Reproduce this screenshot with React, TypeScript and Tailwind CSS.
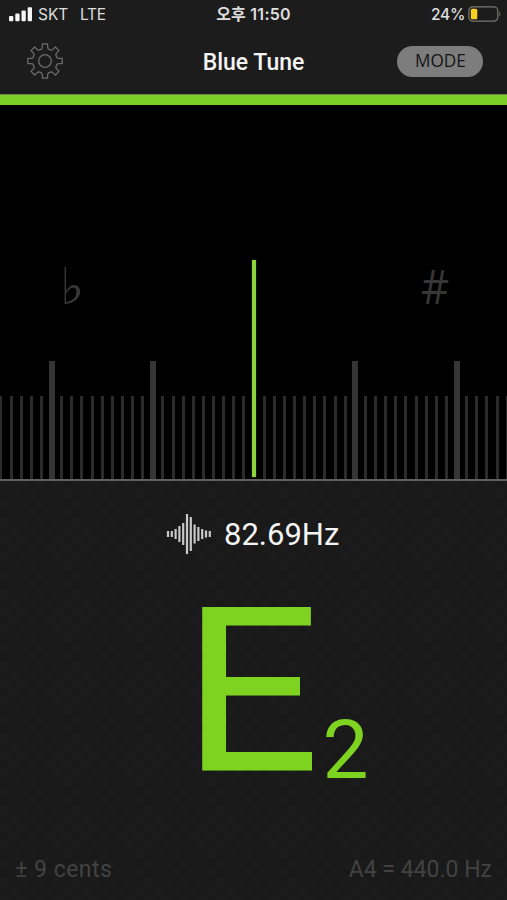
import React from 'react';

const STEP_COUNT = 25;
const ticks = Array.from({ length: STEP_COUNT * 2 + 1 }, (_, i) => i - STEP_COUNT);

// half heights of the wave icon bars
const wave = [3, 3, 5, 8, 11, 20, 17, 9.5, 7, 5, 3.5, 3];

const GearIcon = () => {
  const points: string[] = [];
  for (let i = 0; i < 8; i++) {
    const at = (deg: number, r: number) => {
      const a = ((i * 45 + deg - 90) * Math.PI) / 180;
      return `${(18 + r * Math.cos(a)).toFixed(2)} ${(18 + r * Math.sin(a)).toFixed(2)}`;
    };
    points.push(
      `${i === 0 ? 'M' : 'L'}${at(-16, 12.4)}`,
      `Q${at(-12, 12.8)} ${at(-11, 14)}`,
      `L${at(-8.5, 17.4)}`,
      `L${at(8.5, 17.4)}`,
      `L${at(11, 14)}`,
      `Q${at(12, 12.8)} ${at(16, 12.4)}`
    );
  }
  return (
    <svg className="h-9 w-9" viewBox="0 0 36 36" fill="none" stroke="#6c6c6c" strokeWidth="1.3" strokeLinejoin="round">
      <path d={points.join(' ') + 'Z'} />
      <circle cx="18" cy="18" r="6.3" />
    </svg>
  );
};

const StatusBar = () => (
  <div className="relative flex h-7 items-center justify-between pl-[9px] pr-[6px] text-[#dedede] font-['Inter','Noto_Sans_CJK_KR',sans-serif]">
    <div className="flex items-center">
      <svg className="h-[15px] w-[23px]" viewBox="0 0 23 15" fill="#f5f5f5">
        <rect x="0" y="9" width="4.3" height="5.3" rx="1" />
        <rect x="6.3" y="6.5" width="4.3" height="7.8" rx="1" />
        <rect x="12.5" y="3.5" width="4.3" height="10.8" rx="1" />
        <rect x="18.7" y="0.3" width="4.3" height="14" rx="1" />
      </svg>
      <span className="ml-[6px] mt-[2px] w-[42px] text-[15.5px]">SKT</span>
      <span className="mt-[2px] text-[15.5px] tracking-[-0.3px]">LTE</span>
    </div>
    <div className="absolute inset-x-0 top-[2px] text-center text-[16px] font-semibold tracking-[0.25px]">오후 11:50</div>
    <div className="flex items-center">
      <span className="mt-[2px] text-[15.5px] font-medium tracking-[-0.3px]">24%</span>
      <svg className="ml-[3px] h-4 w-[33px]" viewBox="0 0 33 16">
        <rect x="0.8" y="0.8" width="29" height="14.4" rx="4" fill="none" stroke="#77756f" strokeWidth="1.2" />
        <rect x="2.8" y="2.8" width="6.5" height="10.4" rx="1.5" fill="#facd22" />
        <path d="M31.3 5.5Q33.6 8 31.3 10.5Z" fill="#77756f" />
      </svg>
    </div>
  </div>
);

const Header = () => (
  <div className="relative flex h-[66px] items-center justify-between pl-[27px] pr-[24px]">
    <GearIcon />
    <div className="absolute inset-x-0 top-[18px] text-center text-[23px] font-medium text-[#f4f4f4] font-['Roboto',sans-serif]">
      Blue Tune
    </div>
    <button className="flex h-[31px] w-[86px] items-center justify-center rounded-full bg-[#7d7d7d] pb-[2px] text-[18.5px] text-[#151515] font-['Open_Sans',sans-serif]">
      <span className="inline-block scale-x-[0.93]">MODE</span>
    </button>
  </div>
);

const Meter = () => (
  <div className="relative flex h-[376px] flex-col justify-end overflow-hidden border-b-2 border-[#606060] bg-black">
    <div className="flex h-[76px] items-center justify-between pl-[60px] pr-[57px] text-[#363636]">
      <span className="inline-block translate-y-[5px] text-[51px] leading-none font-['DejaVu_Sans',sans-serif]">♭</span>
      <span className="inline-block translate-y-[5px] scale-x-[0.93] text-[47px] leading-none font-['Open_Sans',sans-serif]">#</span>
    </div>
    <div className="mt-[42px] flex h-[118px] items-end justify-center pl-px">
      {ticks.map((n) => (
        <div key={n} className="flex w-[10.13px] shrink-0 justify-center">
          {n === 0 ? null : n % 10 === 0 ? (
            <div className="h-[118px] w-[6px] shrink-0 bg-[#353535]" />
          ) : (
            <div className="h-[83px] w-[3px] shrink-0 bg-[#2b2b2b]" />
          )}
        </div>
      ))}
    </div>
    <div className="absolute left-[252px] top-[155px] h-[217px] w-[4px] bg-[#8bd43e] shadow-[0_0_1px_#83d02f]" />
  </div>
);

const Note = () => (
  <div className="flex flex-1 flex-col bg-[#1b1b1b] bg-[repeating-conic-gradient(#191919_0_25%,#1b1b1b_0_50%)] bg-size-[18px_18px] font-['Roboto',sans-serif]">
    <div className="mt-[32px] flex h-[42px] items-center pl-[166px]">
      <svg className="h-[42px] w-[46px]" viewBox="0 0 46 42" stroke="#c9c9c9" strokeWidth="2.2">
        {wave.map((h, i) => (
          <line key={i} x1={2 + i * 3.8} x2={2 + i * 3.8} y1={21 - h} y2={21 + h} />
        ))}
      </svg>
      <span className="ml-[12px] text-[31px] leading-none text-[#f4f4f4]">82.69Hz</span>
    </div>
    <div className="flex h-[240px] items-end pl-[183px] leading-none text-[#7ed321]">
      <span className="mb-[-11px] inline-block origin-left scale-x-[1.055] text-[228px] [-webkit-text-stroke:1px_#7ed321]">E</span>
      <span className="ml-[10px] mb-[4px] text-[82px]">2</span>
    </div>
    <div className="mb-[15px] mt-auto flex justify-between pl-[15px] pr-[15px] text-[23px] leading-[30px] text-[#424242]">
      <span className="tracking-[0.5px]">± 9 cents</span>
      <span>A4 = 440.0 Hz</span>
    </div>
  </div>
);

const App: React.FC = () => {
  return (
    <div className="flex h-[900px] w-[507px] flex-col overflow-hidden bg-[#1c1c1c]">
      <StatusBar />
      <Header />
      <div className="h-[11px] border-t border-[#67874a] bg-[#7dcf27]" />
      <Meter />
      <Note />
    </div>
  );
};

export default App;
